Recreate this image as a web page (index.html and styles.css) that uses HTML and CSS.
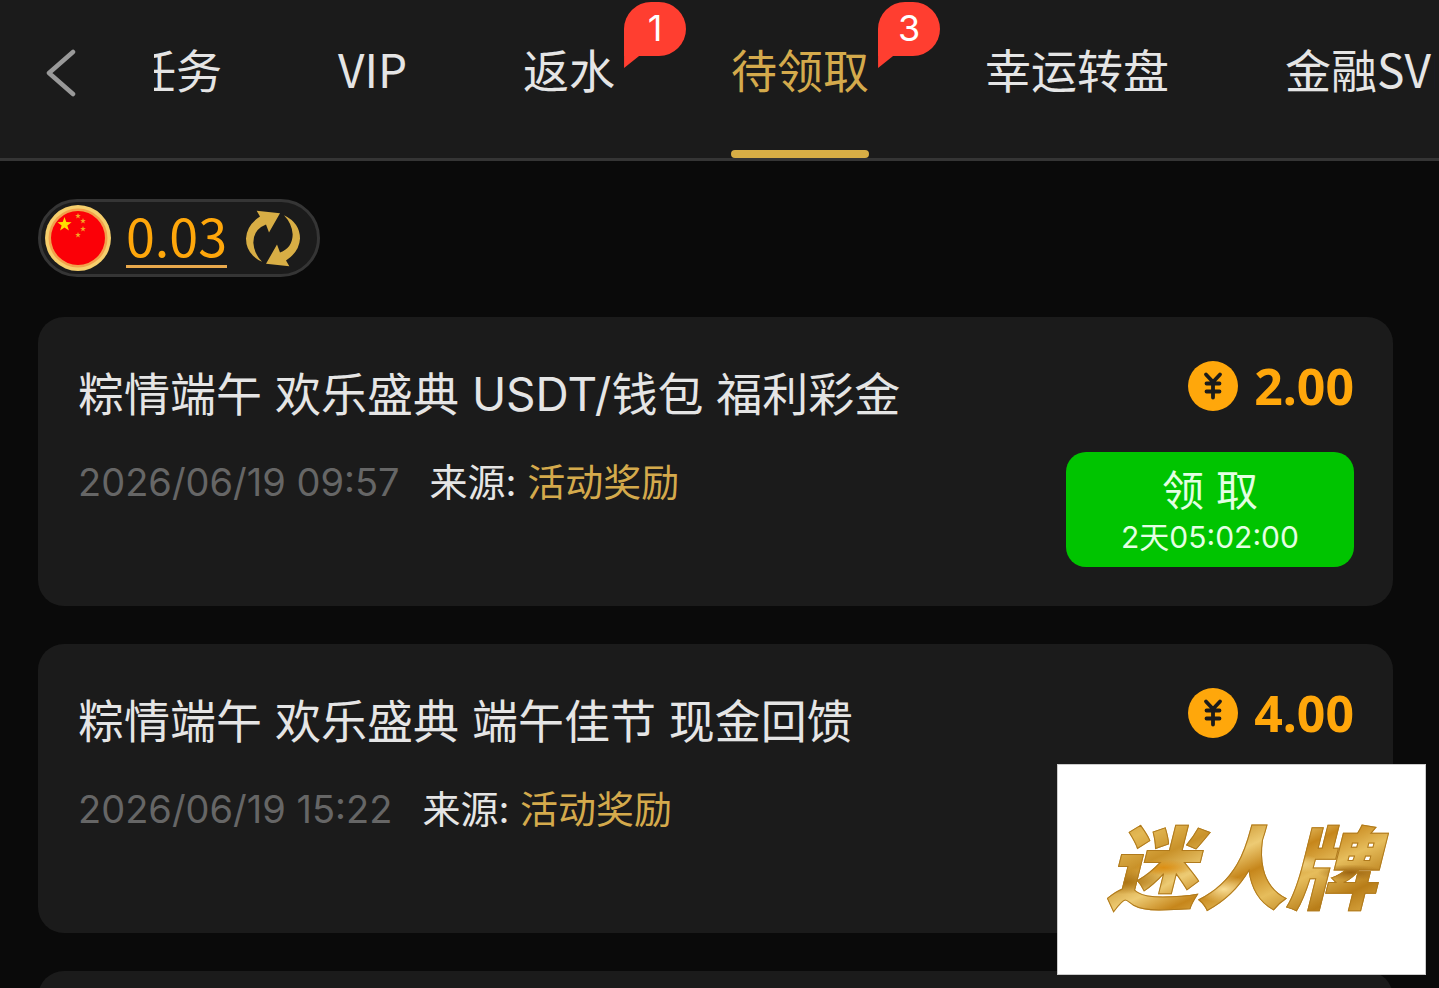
FILE: index.html
```html
<!DOCTYPE html>
<html lang="zh-CN">
<head>
    <meta charset="UTF-8">
    <meta name="viewport" content="width=device-width, initial-scale=1.0">
    <title>待领取</title>
    <link rel="stylesheet" href="styles.css">
</head>
<body>
    <svg class="sprite" aria-hidden="true">
        <symbol id="icon-yen" viewBox="0 0 50 50">
            <circle cx="25" cy="25" r="25" fill="#ffa70b"/>
            <path d="M18 13.5 L25 21 L32 13.5 M18.5 22.5 H31.5 M18.5 30.5 H31.5 M25 21 V36.5" fill="none" stroke="#1b1b1b" stroke-width="3.8" stroke-linecap="round" stroke-linejoin="round"/>
        </symbol>
        <symbol id="star" viewBox="-10 -10 20 20">
            <path d="M0 -10 L2.4 -3.2 L9.5 -3.1 L3.8 1.2 L5.9 8.1 L0 4 L-5.9 8.1 L-3.8 1.2 L-9.5 -3.1 L-2.4 -3.2 Z"/>
        </symbol>
    </svg>

    <header class="header">
        <button class="back" type="button" aria-label="返回">
            <svg width="30" height="48" viewBox="0 0 30 48">
                <path d="M27 3 L3 24 L27 45" fill="none" stroke="#999" stroke-width="4.5" stroke-linecap="round" stroke-linejoin="round"/>
            </svg>
        </button>
        <nav class="tabs">
            <ul class="tab-list">
                <li><a class="tab" href="#">任务</a></li>
                <li><a class="tab" href="#">VIP</a></li>
                <li><a class="tab" href="#">返水<span class="badge">1</span></a></li>
                <li><a class="tab active" href="#">待领取<span class="badge">3</span></a></li>
                <li><a class="tab" href="#">幸运转盘</a></li>
                <li><a class="tab" href="#">金融SVIP</a></li>
            </ul>
        </nav>
    </header>

    <main class="content">
        <div class="balance">
            <svg class="flag" viewBox="0 0 66 66">
                <circle cx="33" cy="33" r="33" fill="#f6cf6c"/>
                <circle cx="33" cy="33" r="29.5" fill="#f2a14b"/>
                <circle cx="33" cy="33" r="27" fill="#fb0007"/>
                <g fill="#ffde00">
                    <use href="#star" x="12" y="12" width="15" height="15"/>
                    <g fill="#f5a623">
                        <use href="#star" x="30" y="8" width="6" height="6"/>
                        <use href="#star" x="35" y="13" width="6" height="6"/>
                        <use href="#star" x="35" y="21" width="6" height="6"/>
                        <use href="#star" x="30" y="27" width="6" height="6"/>
                    </g>
                </g>
            </svg>
            <a class="amount" href="#">0.03</a>
            <button class="refresh" type="button" aria-label="刷新">
                <svg width="54" height="57" viewBox="0 0 162 170" fill="#d8ae45">
                    <path d="M48 155 Q0 132 0 85 Q2 45 42 19 L32 2 L102 9 L69 67 L60 43 Q22 58 22 98 Q24 130 48 155 Z"/>
                    <path d="M48 155 Q0 132 0 85 Q2 45 42 19 L32 2 L102 9 L69 67 L60 43 Q22 58 22 98 Q24 130 48 155 Z" transform="rotate(180 81 85)"/>
                </svg>
            </button>
        </div>

        <section class="card">
            <div class="info">
                <h2>粽情端午 欢乐盛典 USDT/钱包 福利彩金</h2>
                <p class="meta"><time>2026/06/19 09:57</time><span>来源: <a href="#">活动奖励</a></span></p>
            </div>
            <div class="reward">
                <div class="price"><svg class="coin"><use href="#icon-yen"/></svg>2.00</div>
                <button class="claim" type="button">领 取<small>2天05:02:00</small></button>
            </div>
        </section>

        <section class="card">
            <div class="info">
                <h2>粽情端午 欢乐盛典 端午佳节 现金回馈</h2>
                <p class="meta"><time>2026/06/19 15:22</time><span>来源: <a href="#">活动奖励</a></span></p>
            </div>
            <div class="reward">
                <div class="price"><svg class="coin"><use href="#icon-yen"/></svg>4.00</div>
            </div>
        </section>

        <section class="card"></section>
    </main>

    <a class="brand" href="#"><span>迷人牌</span></a>
</body>
</html>
```
FILE: styles.css
```css
* {
    box-sizing: border-box;
}
body {
    margin: 0;
    height: 100vh;
    display: flex;
    flex-direction: column;
    background: #0a0a0a;
    color: #e5e5e5;
    font-family: Inter, "Noto Sans CJK SC", sans-serif;
}
a {
    color: inherit;
    text-decoration: none;
}
button {
    border: none;
    padding: 0;
    background: none;
    font-family: inherit;
    cursor: pointer;
}
.sprite {
    position: absolute;
    width: 0;
    height: 0;
}

/* header */
.header {
    flex: none;
    display: flex;
    background: #1b1b1b;
    border-bottom: 3px solid #353535;
}
.back {
    flex: none;
    width: 154px;
    padding: 0 0 12px 46px;
    text-align: left;
}
.back svg {
    display: block;
}
.tabs {
    flex: 1;
    margin-right: 4px;
    overflow: hidden;
}
.tab-list {
    display: flex;
    gap: 116px;
    margin: 0 0 0 -24px;
    padding: 0;
    list-style: none;
}
.tab {
    display: block;
    position: relative;
    height: 158px;
    font-family: "Noto Sans CJK SC", sans-serif;
    font-size: 46px;
    line-height: 136px;
    white-space: nowrap;
}
.tab.active {
    color: #d4aa4c;
}
.tab.active::after {
    content: "";
    position: absolute;
    left: 0;
    right: 0;
    bottom: 0;
    height: 8px;
    border-radius: 4px;
    background: #d8ae45;
}
.badge {
    position: absolute;
    top: 2px;
    left: calc(100% + 9px);
    width: 62px;
    height: 54px;
    border-radius: 27px 27px 27px 0;
    background: #ff3e30;
    color: #fff;
    font-family: Inter, sans-serif;
    font-size: 36px;
    line-height: 52px;
    text-align: center;
}
.badge::after {
    content: "";
    position: absolute;
    left: 0;
    top: 100%;
    width: 15px;
    height: 12px;
    background: #ff3e30;
    clip-path: polygon(0 0, 100% 0, 0 100%);
}

/* list */
.content {
    flex: 1;
    min-height: 0;
    overflow: hidden;
    padding: 38px 46px 0 38px;
}
.balance {
    display: flex;
    align-items: center;
    width: fit-content;
    margin-bottom: 40px;
    padding: 3px 17px 3px 4px;
    border: 3px solid #353535;
    border-radius: 40px;
    background: #1b1b1b;
}
.flag {
    width: 66px;
    height: 66px;
    margin-right: 15px;
}
.amount {
    margin-right: 19px;
    padding-bottom: 4px;
    border-bottom: 3px solid #e9a94c;
    color: #ffa70b;
    font-family: "Noto Sans CJK SC", sans-serif;
    font-size: 52px;
    line-height: 52px;
}
.refresh svg {
    display: block;
}
.card {
    display: flex;
    justify-content: space-between;
    min-height: 289px;
    margin-bottom: 38px;
    padding: 44px 39px 39px 40px;
    border-radius: 26px;
    background: #1b1b1b;
}
.card h2 {
    margin: 0 0 25px;
    font-size: 46px;
    font-weight: normal;
    line-height: 66px;
}
.meta {
    display: flex;
    gap: 30px;
    margin: 0;
    font-size: 38px;
    line-height: 60px;
}
.meta time {
    color: #666;
}
.meta a {
    color: #d4aa4c;
}
.reward {
    flex: none;
    width: 288px;
}
.price {
    display: flex;
    align-items: center;
    justify-content: flex-end;
    gap: 16px;
    margin-bottom: 41px;
    color: #ffa70b;
    font-family: "Noto Sans", sans-serif;
    font-size: 50px;
    font-weight: bold;
    line-height: 50px;
}
.coin {
    width: 50px;
    height: 50px;
}
.claim {
    display: block;
    width: 100%;
    height: 115px;
    padding-top: 6px;
    border-radius: 20px;
    background: #00c400;
    color: #e3ffe3;
    font-size: 42px;
    line-height: 48px;
}
.claim small {
    display: block;
    font-size: 30px;
    line-height: 44px;
}

/* floating brand */
.brand {
    position: fixed;
    right: 13px;
    bottom: 13px;
    width: 369px;
    height: 211px;
    display: flex;
    align-items: center;
    justify-content: center;
    border: 1px solid #ccc;
    background: #fff;
}
.brand span {
    padding: 0 16px;
    background:
        radial-gradient(ellipse at 24% 48%, #dc8f14 0, transparent 9%),
        radial-gradient(ellipse at 44% 66%, #f8dd95 0, transparent 12%),
        radial-gradient(ellipse at 68% 45%, #f5da8c 0, transparent 10%),
        radial-gradient(ellipse at 86% 52%, #9c6410 0, transparent 9%),
        radial-gradient(ellipse at 10% 60%, #a9700f 0, transparent 12%),
        linear-gradient(155deg, #c08420 0, #e3b854 18%, #c9922a 30%, #edcb74 42%, #c6861b 52%, #e6bd5c 64%, #b87d18 78%, #dcaa45 90%, #b0730f 100%);
    -webkit-background-clip: text;
    background-clip: text;
    -webkit-text-stroke: 1px #b07a1c;
    color: transparent;
    font-size: 90px;
    font-style: italic;
    font-weight: 900;
    line-height: 120px;
}
```
